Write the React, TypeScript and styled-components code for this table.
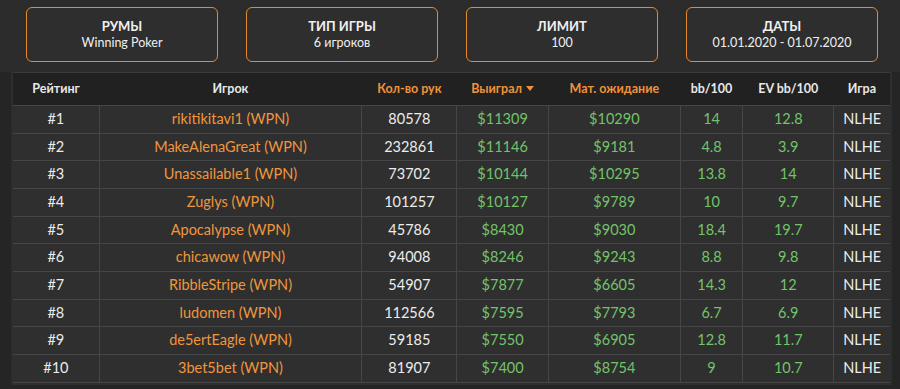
import styled, { createGlobalStyle } from "styled-components"

const GlobalStyle = createGlobalStyle`
    html, body {
        margin: 0;
        padding: 0;
        background-color: #2c2c2c;
        font-family: Lato, "Open Sans", "Noto Sans", sans-serif;
        color: #e6e6e6;
    }
`

type Filter = { title: string, value: string }

const filters: Filter[] = [
    { title: 'Румы', value: 'Winning Poker' },
    { title: 'Тип игры', value: '6 игроков' },
    { title: 'Лимит', value: '100' },
    { title: 'Даты', value: '01.01.2020 - 01.07.2020' },
]

type Player = [string, string, number, number, number, number, number, string]

const players: Player[] = [
    ['#1', 'rikitikitavi1', 80578, 11309, 10290, 14, 12.8, 'NLHE'],
    ['#2', 'MakeAlenaGreat', 232861, 11146, 9181, 4.8, 3.9, 'NLHE'],
    ['#3', 'Unassailable1', 73702, 10144, 10295, 13.8, 14, 'NLHE'],
    ['#4', 'Zuglys', 101257, 10127, 9789, 10, 9.7, 'NLHE'],
    ['#5', 'Apocalypse', 45786, 8430, 9030, 18.4, 19.7, 'NLHE'],
    ['#6', 'chicawow', 94008, 8246, 9243, 8.8, 9.8, 'NLHE'],
    ['#7', 'RibbleStripe', 54907, 7877, 6605, 14.3, 12, 'NLHE'],
    ['#8', 'ludomen', 112566, 7595, 7793, 6.7, 6.9, 'NLHE'],
    ['#9', 'de5ertEagle', 59185, 7550, 6905, 12.8, 11.7, 'NLHE'],
    ['#10', '3bet5bet', 81907, 7400, 8754, 9, 10.7, 'NLHE'],
]

const columns = [
    { label: 'Рейтинг', width: 87 },
    { label: 'Игрок', width: 262 },
    { label: 'Кол-во рук', width: 95, accent: true },
    { label: 'Выиграл', width: 91, accent: true, sorted: true },
    { label: 'Мат. ожидание', width: 132, accent: true },
    { label: 'bb/100', width: 62 },
    { label: 'EV bb/100', width: 91 },
    { label: 'Игра', width: 57 },
]

export default function App () {
    return (
        <Page>
            <GlobalStyle />
            <Filters>
                {filters.map((f) => (
                    <FilterCard key={f.title}>
                        <strong>{f.title}</strong>
                        <span>{f.value}</span>
                    </FilterCard>
                ))}
            </Filters>

            <TableFrame>
                <Table>
                    <colgroup>
                        {columns.map((c) => <col key={c.label} style={{ width: c.width }} />)}
                    </colgroup>
                    <thead>
                        <tr>
                            {columns.map((c) => (
                                <HeadCell key={c.label} $accent={c.accent}>
                                    {c.label}
                                    {c.sorted && <Caret />}
                                </HeadCell>
                            ))}
                        </tr>
                    </thead>
                    <tbody>
                        {players.map(([rank, name, hands, won, ev, bb, evbb, game]) => (
                            <tr key={rank}>
                                <Cell>{rank}</Cell>
                                <Cell $tone="orange">{name} (WPN)</Cell>
                                <Cell>{hands}</Cell>
                                <Cell $tone="green">${won}</Cell>
                                <Cell $tone="green">${ev}</Cell>
                                <Cell $tone="green">{bb}</Cell>
                                <Cell $tone="green">{evbb}</Cell>
                                <Cell>{game}</Cell>
                            </tr>
                        ))}
                        {/* next row starts just below the fold */}
                        <tr>
                            {columns.map((c) => <Cell key={c.label} />)}
                        </tr>
                    </tbody>
                </Table>
            </TableFrame>
        </Page>
    )
}

const Page = styled.div`
    width: 900px;
    height: 389px;
    overflow: hidden;
`

const Filters = styled.div`
    display: flex;
    gap: 28px;
    padding: 7px 0 0 26px;
    height: 72px;
    box-sizing: border-box;
`

const FilterCard = styled.div`
    width: 192px;
    height: 55px;
    box-sizing: border-box;
    border: 1px solid #e8892c;
    border-radius: 6px;
    background-color: #2e2e2e;
    display: flex;
    flex-direction: column;
    align-items: center;
    justify-content: center;
    gap: 1px;
    font-size: 12.5px;
    line-height: 16px;
    color: #f0f0f0;

    & strong {
        text-transform: uppercase;
        font-weight: 700;
        font-size: 13px;
    }
`

const TableFrame = styled.div`
    background-color: #252525;
    padding: 0 8px 0 11px;
    height: 317px;
    overflow: hidden;
`

const Table = styled.table`
    border-collapse: collapse;
    table-layout: fixed;
    width: 881px;
    background-color: #2f2f2f;
    border: 2px solid #2e2e2e;
    border-top: none;
`

const HeadCell = styled.th<{ $accent?: boolean }>`
    padding: 0;
    line-height: 32px;
    background-color: #212121;
    border-top: 1px solid #3a3a3a;
    border-bottom: 1px solid #474747;
    font-size: 12.5px;
    font-weight: 700;
    color: ${(p) => p.$accent ? '#f0923a' : '#e8e8e8'};
    text-align: center;
    white-space: nowrap;
`

const Caret = styled.span`
    display: inline-block;
    margin-left: 4px;
    vertical-align: 2px;
    border-left: 4px solid transparent;
    border-right: 4px solid transparent;
    border-top: 5px solid #f0923a;
`

const Cell = styled.td<{ $tone?: 'orange' | 'green' }>`
    padding: 0;
    line-height: 26.67px;
    border: 1px solid #464646;
    text-align: center;
    font-size: 14.5px;
    color: ${(p) => p.$tone === 'orange' ? '#f0963c' : p.$tone === 'green' ? '#72c46a' : '#ececec'};
    white-space: nowrap;
`
